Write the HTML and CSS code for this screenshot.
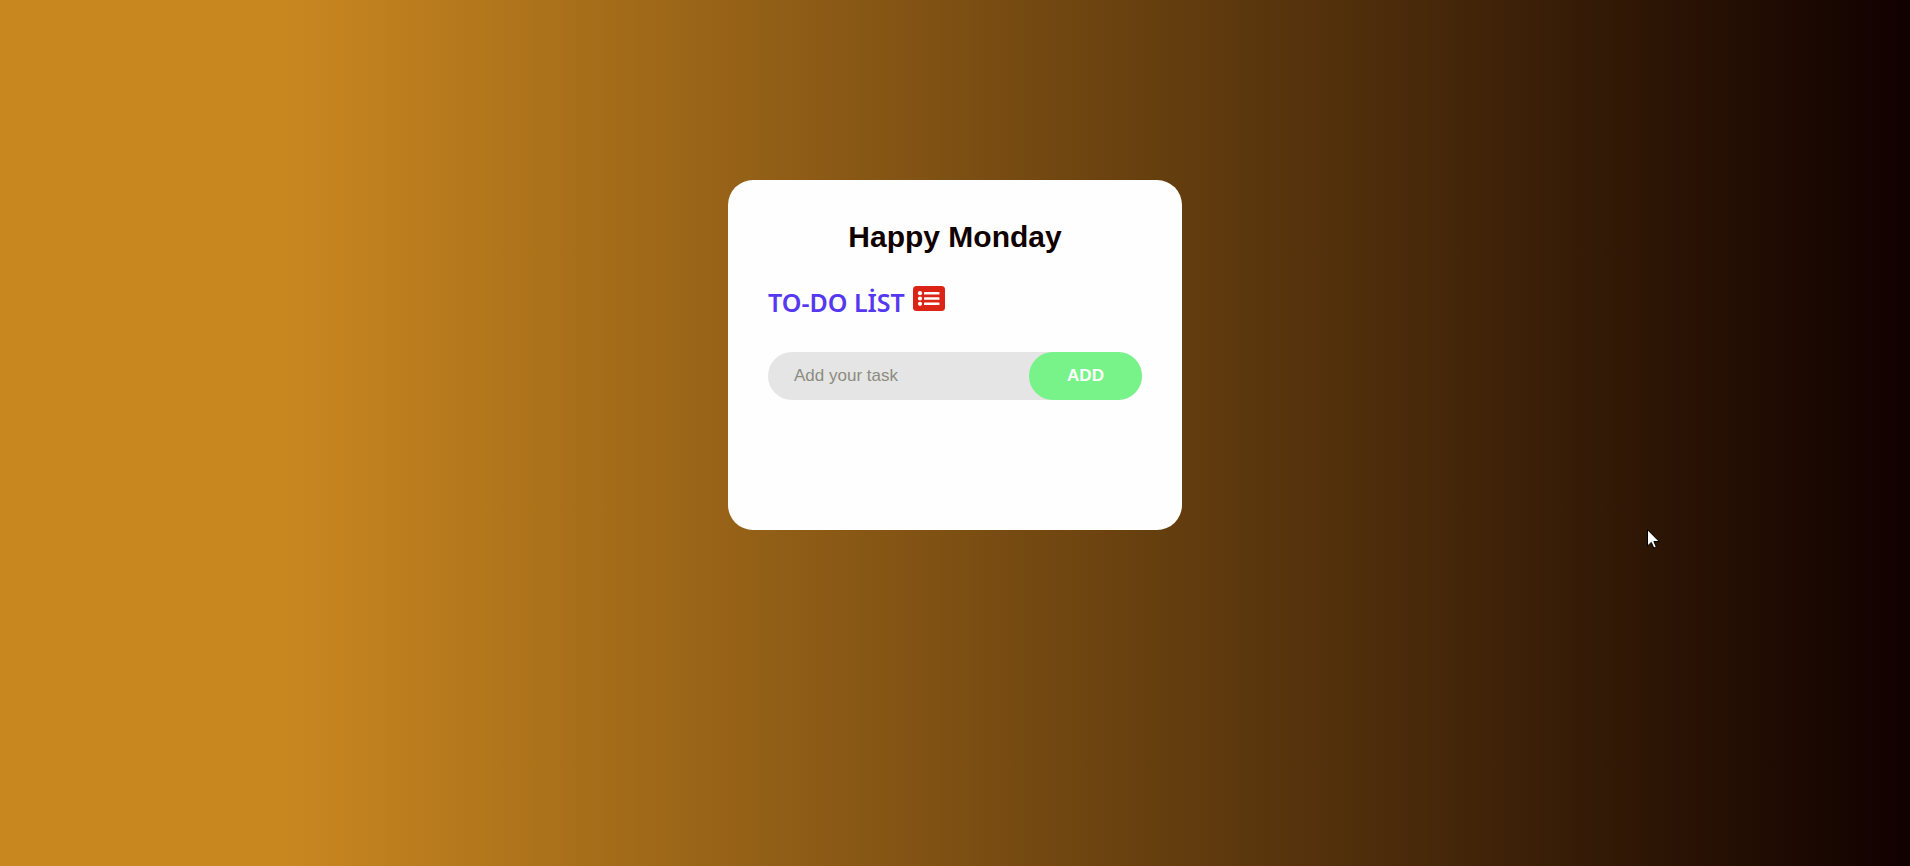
FILE: index.html
```html
<!DOCTYPE html>
<html lang="en">
<head>
<meta charset="utf-8">
<title>To-Do List</title>
<link rel="stylesheet" href="styles.css">
</head>
<body>
<main class="card">
  <h1 class="greeting">Happy Monday</h1>
  <h2 class="title">
    <span>TO-DO LİST</span>
    <svg class="title-icon" viewBox="0 0 32 25" aria-hidden="true">
      <rect width="32" height="25" rx="3.500" fill="#dc2416"/>
      <g fill="#fff">
        <circle cx="7" cy="7.200" r="2.100"/><circle cx="7" cy="12.500" r="2.100"/><circle cx="7" cy="17.800" r="2.100"/>
        <rect x="11" y="6" width="15.500" height="2.500" rx=".6"/>
        <rect x="11" y="11.250" width="15.500" height="2.500" rx=".6"/>
        <rect x="11" y="16.500" width="15.500" height="2.500" rx=".6"/>
      </g>
    </svg>
  </h2>
  <form class="task-form">
    <input class="task-input" type="text" placeholder="Add your task" aria-label="Add your task">
    <button class="add-button" type="button">ADD</button>
  </form>
</main>
<svg class="pointer" viewBox="0 0 13 20" aria-hidden="true">
  <path d="M.5.700v16.300l3.800-3.600 2.500 5.600 2.500-1.100-2.400-5.400h5.300z" fill="#fff" stroke="#000"/>
</svg>
</body>
</html>
```

FILE: styles.css
```css
* {
  box-sizing: border-box;
  margin: 0;
  padding: 0;
}

body {
  min-height: 100vh;
  padding: 180px 16px 40px;
  font-family: "Liberation Sans", Arial, sans-serif;
  background: linear-gradient(to right, #c98720 15%, #100000);
}

.card {
  max-width: 454px;
  min-height: 350px;
  margin: 0 auto;
  padding: 40px;
  border-radius: 25px;
  background: #fefefe;
}

.greeting {
  font-size: 30px;
  line-height: 34px;
  text-align: center;
  color: #100000;
}

.title {
  display: flex;
  gap: 8px;
  margin: 32px 0 36px;
  font-family: "Noto Sans", "Open Sans", sans-serif;
  font-size: 25px;
  font-weight: 600;
  line-height: 28px;
  color: #5538f0;
}

.title span {
  padding-top: 2px;
}

.title-icon {
  width: 32px;
  height: 25px;
}

.task-form {
  display: flex;
  border-radius: 24px;
  background: #e5e5e5;
}

.task-input {
  flex: 1;
  min-width: 0;
  padding: 0 26px;
  border: 0;
  outline: 0;
  background: transparent;
  font: 17px "Liberation Sans", Arial, sans-serif;
}

.task-input::placeholder {
  color: #8c8c80;
}

.add-button {
  width: 113px;
  height: 48px;
  border: 0;
  border-radius: 24px;
  background: #77f38a;
  font: bold 17px "Liberation Sans", Arial, sans-serif;
  color: #fff;
}

.pointer {
  position: absolute;
  top: 529px;
  left: 1647px;
  width: 13px;
  height: 20px;
}
```
